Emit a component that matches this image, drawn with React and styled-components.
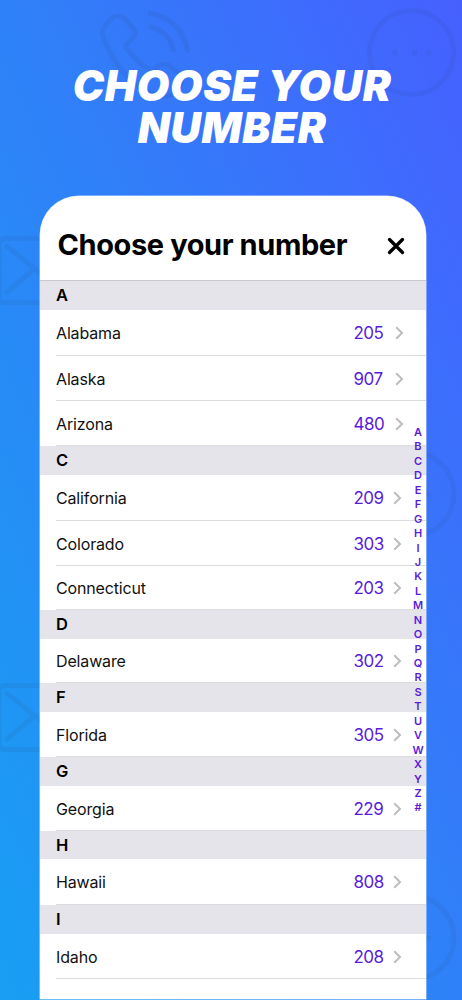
import styled, { createGlobalStyle } from "styled-components";

const GlobalStyle = createGlobalStyle`
  * {
    box-sizing: border-box;
  }
  body {
    margin: 0;
    font-family: Inter, "Liberation Sans", sans-serif;
  }
`;

const Page = styled.main`
  position: relative;
  width: 462px;
  height: 1000px;
  overflow: hidden;
  padding-top: 65px;
  background: linear-gradient(to top right, #189ff3 0%, #2f81f8 50%, #4660ff 100%);
`;

const Doodles = styled.svg`
  position: absolute;
  top: 0;
  left: 0;
  fill: none;
  stroke: #28406e;
  stroke-width: 5;
  stroke-linecap: round;
  stroke-linejoin: round;
`;

const Title = styled.h1`
  position: relative;
  height: 131px;
  margin: 0;
  padding-left: 2px;
  font-size: 42px;
  font-weight: 900;
  font-style: italic;
  line-height: 42px;
  letter-spacing: 0.6px;
  text-align: center;
  color: #fff;
`;

const Card = styled.section`
  position: relative;
  width: 386px;
  height: 803px;
  margin-left: 40px;
  overflow: hidden;
  border-radius: 39px 39px 0 0;
  background: #fff;
  box-shadow: 0 0 0 0.5px rgba(255, 255, 255, 0.7);
`;

const CardHeader = styled.header`
  display: flex;
  align-items: center;
  justify-content: space-between;
  height: 85px;
  padding: 13px 21px 0 17.5px;
  border-bottom: 1px solid #c9c9cc;
`;

const Heading = styled.h2`
  margin: 0;
  font-size: 29px;
  font-weight: 700;
  letter-spacing: -0.4px;
  line-height: 36px;
  white-space: nowrap;
  color: #000;
`;

const CloseButton = styled.button`
  display: flex;
  padding: 3px 0 0;
  border: 0;
  background: none;
`;

const SectionTitle = styled.h3`
  height: ${(props) => props.$height}px;
  margin: 0;
  padding-left: 16px;
  background: #e5e4ea;
  font-size: 16.5px;
  font-weight: 600;
  line-height: ${(props) => props.$height}px;
  color: #000;
`;

const Row = styled.div`
  display: flex;
  align-items: center;
  height: ${(props) => props.$height}px;
  margin-left: 16px;
  padding: 1px ${(props) => props.$inset}px 0 0;
  border-bottom: 1px solid #dcdcdf;
`;

const StateName = styled.span`
  flex: 1;
  font-size: 16px;
  letter-spacing: -0.15px;
  color: #111;
`;

const AreaCode = styled.span`
  width: ${(props) => props.$width}px;
  font-size: 17px;
  letter-spacing: -0.5px;
  color: #5a1cdc;
`;

const AlphabetIndex = styled.nav`
  position: absolute;
  top: 229px;
  right: 1px;
  width: 14px;
  display: flex;
  flex-direction: column;
  align-items: center;
  font-size: 11px;
  font-weight: 600;
  line-height: 14.43px;
  color: #5a1cdc;
`;

const sections = [
  {
    letter: "A",
    height: 29,
    states: [
      { name: "Alabama", code: "205", height: 46 },
      { name: "Alaska", code: "907", height: 45 },
      { name: "Arizona", code: "480", height: 45 },
    ],
  },
  {
    letter: "C",
    height: 29,
    states: [
      { name: "California", code: "209", height: 46 },
      { name: "Colorado", code: "303", height: 45 },
      { name: "Connecticut", code: "203", height: 44 },
    ],
  },
  { letter: "D", height: 29, states: [{ name: "Delaware", code: "302", height: 44 }] },
  { letter: "F", height: 29, states: [{ name: "Florida", code: "305", height: 45 }] },
  { letter: "G", height: 29, states: [{ name: "Georgia", code: "229", height: 45 }] },
  { letter: "H", height: 28, states: [{ name: "Hawaii", code: "808", height: 46 }] },
  { letter: "I", height: 29, states: [{ name: "Idaho", code: "208", height: 45 }] },
];

const alphabet = "ABCDEFGHIJKLMNOPQRSTUVWXYZ#".split("");

const ChevronIcon = () => (
  <svg width="9" height="14" viewBox="0 0 9 14" fill="none" stroke="#bdbdc0" strokeWidth="2">
    <path d="M1.2 1.3 7 7l-5.8 5.7" />
  </svg>
);

const CloseIcon = () => (
  <svg width="18" height="18" viewBox="0 0 18 18" stroke="#000" strokeWidth="3.3" strokeLinecap="round">
    <path d="M2.5 2.5l13 13M15.5 2.5l-13 13" />
  </svg>
);

const Background = () => (
  <Doodles width="462" height="1000" viewBox="0 0 462 1000">
    <g opacity="0.09">
      <path d="M112 18q6-4 12 0l9 10q4 5 0 10l-7 7q-1 1 2 5 9 12 19 18 3 3 6 2l5-4q6-4 12 0l9 8q6 6 0 12l-5 7q-8 6-20 2-23-10-36-30-12-17-15-30-1-6 2-9z" />
      <path d="M150 13.500q31 5 37.500 37" />
      <path d="M150.500 27q18 4 23 23" />
    </g>
    <g opacity="0.08">
      <circle cx="411.500" cy="52.500" r="42" />
      <g fill="#28406e" stroke="none">
        <circle cx="395" cy="52.500" r="3" />
        <circle cx="414.500" cy="52.500" r="3" />
        <circle cx="428.500" cy="52.500" r="3" />
      </g>
    </g>
    {[238, 685].map((y) => (
      <g key={y} opacity="0.08" transform={`translate(0 ${y})`}>
        <rect x="-1" y="0.500" width="96" height="64" rx="6" />
        <path d="M7 8.500l35 28M32 33L7 54" />
      </g>
    ))}
    {[494, 938].map((y) => (
      <g key={y} opacity="0.08">
        <circle cx="412" cy={y} r="42" />
        <circle cx="428" cy={y} r="3" fill="#28406e" stroke="none" />
      </g>
    ))}
  </Doodles>
);

const App = () => {
  return (
    <Page>
      <GlobalStyle />
      <Background />
      <Title>
        CHOOSE YOUR
        <br />
        NUMBER
      </Title>
      <Card>
        <CardHeader>
          <Heading>Choose your number</Heading>
          <CloseButton aria-label="Close">
            <CloseIcon />
          </CloseButton>
        </CardHeader>
        {sections.map((section, index) => (
          <div key={section.letter}>
            <SectionTitle $height={section.height}>{section.letter}</SectionTitle>
            {section.states.map((state) => (
              <Row key={state.name} $height={state.height} $inset={index === 0 ? 22.5 : 24.5}>
                <StateName>{state.name}</StateName>
                <AreaCode $width={index === 0 ? 41 : 39}>{state.code}</AreaCode>
                <ChevronIcon />
              </Row>
            ))}
          </div>
        ))}
        <AlphabetIndex>
          {alphabet.map((letter) => (
            <span key={letter}>{letter}</span>
          ))}
        </AlphabetIndex>
      </Card>
    </Page>
  );
};

export default App;
